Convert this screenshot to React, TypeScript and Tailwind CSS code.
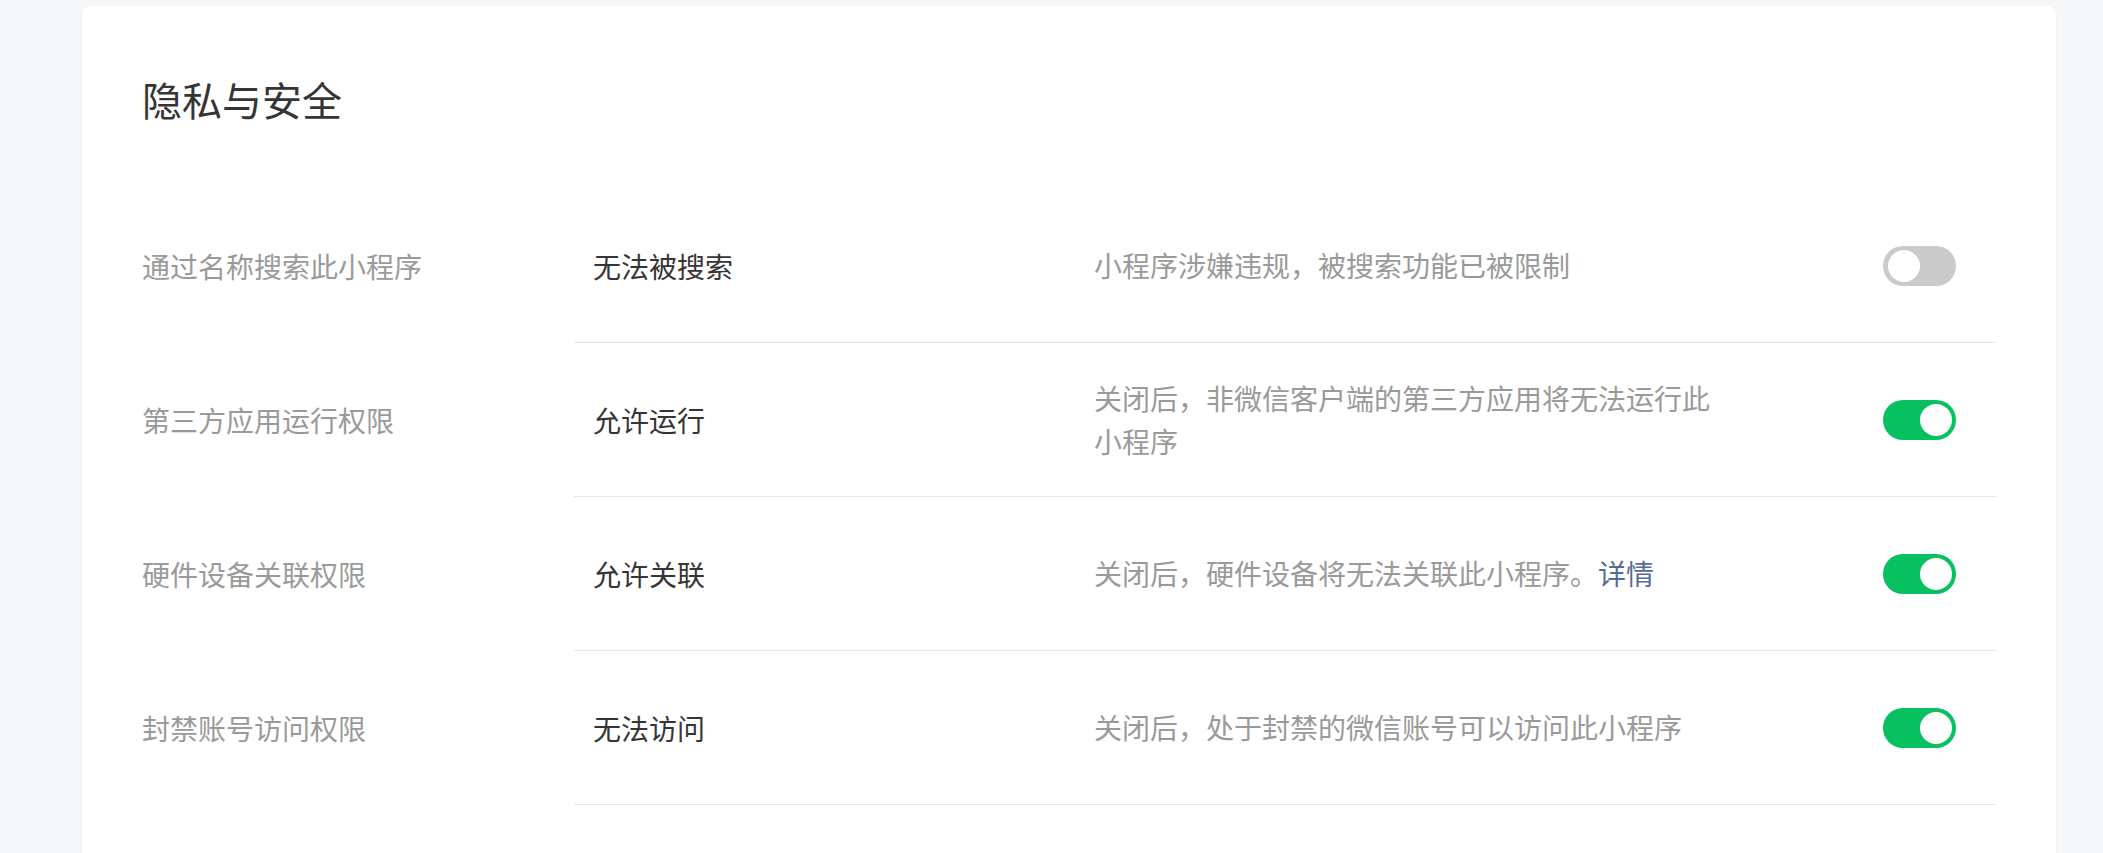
import React from "react";

type Row = {
  label: string;
  value: string;
  desc: React.ReactNode;
  on: boolean;
};

const rows: Row[] = [
  {
    label: "通过名称搜索此小程序",
    value: "无法被搜索",
    desc: "小程序涉嫌违规，被搜索功能已被限制",
    on: false,
  },
  {
    label: "第三方应用运行权限",
    value: "允许运行",
    desc: "关闭后，非微信客户端的第三方应用将无法运行此小程序",
    on: true,
  },
  {
    label: "硬件设备关联权限",
    value: "允许关联",
    desc: (
      <>
        关闭后，硬件设备将无法关联此小程序。
        <a className="text-[#576b95] cursor-pointer">详情</a>
      </>
    ),
    on: true,
  },
  {
    label: "封禁账号访问权限",
    value: "无法访问",
    desc: "关闭后，处于封禁的微信账号可以访问此小程序",
    on: true,
  },
];

function Toggle({ on }: { on: boolean }) {
  return (
    <div
      className={
        on
          ? "w-[73px] h-[40px] rounded-full bg-[#07c160] flex items-center justify-end px-[4px]"
          : "w-[73px] h-[40px] rounded-full bg-[#cacaca] flex items-center justify-start px-[5px]"
      }
    >
      <div className="w-[32px] h-[32px] rounded-full bg-white" />
    </div>
  );
}

export default function App() {
  return (
    <div
      className="min-h-screen bg-[#f6f7f9] pt-[6px] overflow-hidden"
      style={{ height: 853 }}
    >
      <div
        className="ml-[82px] mr-[47px] bg-white rounded-[8px] shadow-[0_1px_3px_rgba(0,0,0,0.06)] px-[60px] pt-[65px] pb-[100px]"
        style={{ fontFamily: '"Noto Sans CJK SC", "Noto Sans", sans-serif' }}
      >
        <h2 className="text-[40px] leading-[56px] text-[#353535] font-normal">隐私与安全</h2>
        <div className="mt-[62px]">
          {rows.map((r, i) => (
            <div key={i} className="flex h-[154px]">
              <div className="w-[432px] shrink-0 flex items-center text-[28px] text-[#9a9a9a]">
                {r.label}
              </div>
              <div className="flex-1 flex items-center border-b border-[#e7e7eb] pl-[19px]">
                <div className="w-[501px] shrink-0 text-[28px] text-[#353535]">{r.value}</div>
                <div className="w-[630px] shrink-0 text-[28px] leading-[43px] text-[#9a9a9a]">
                  {r.desc}
                </div>
                <div className="flex-1 flex justify-end pr-[40px]">
                  <Toggle on={r.on} />
                </div>
              </div>
            </div>
          ))}
        </div>
      </div>
    </div>
  );
}
